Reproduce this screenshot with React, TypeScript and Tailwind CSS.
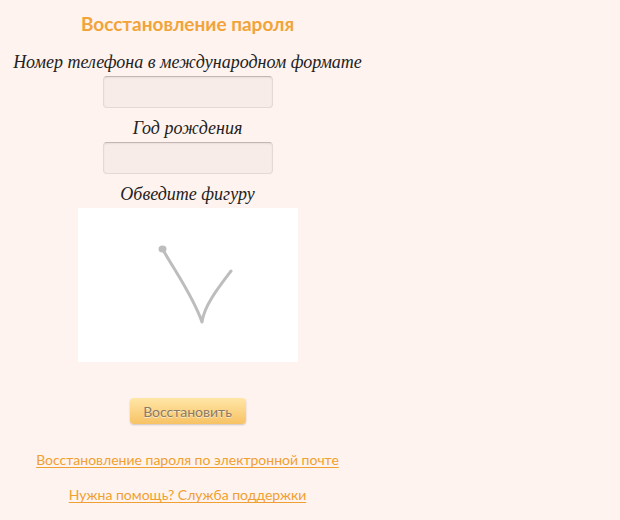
export default function App() {
  const serif = "font-['Liberation_Serif','DejaVu_Serif',serif] italic text-[18px] text-[#222]";
  const input =
    "h-[32px] w-[170px] rounded-[4px] border border-[#e6d8d4] border-t-[#c4b6b2] bg-[#f7ece8] shadow-[inset_0_1px_2px_rgba(0,0,0,0.06)]";

  return (
    <div className="min-h-[520px] w-[620px] bg-[#fff3ef] font-['Lato','Liberation_Sans',sans-serif]">
      <div className="flex w-[375px] flex-col items-center pt-[12px] text-center">
        <h1 className="text-[19px] font-bold leading-[24px] text-[#f0a43a]">Восстановление пароля</h1>

        <p className={`mt-[16px] leading-[20px] ${serif}`}>Номер телефона в международном формате</p>
        <input type="text" className={`mt-[4px] ${input}`} />

        <p className={`mt-[10px] leading-[20px] ${serif}`}>Год рождения</p>
        <input type="text" className={`mt-[4px] ${input}`} />

        <p className={`mt-[10px] leading-[20px] ${serif}`}>Обведите фигуру</p>
        <div className="mt-[4px] h-[154px] w-[220px] bg-white">
          <svg width="220" height="154" viewBox="0 0 220 154">
            <path
              d="M84 40 C 96 62, 114 86, 124 114 M124 114 C 126 98, 140 80, 153 63"
              fill="none"
              stroke="#bdbdbd"
              strokeWidth="3"
              strokeLinecap="round"
            />
            <ellipse cx="84.5" cy="41" rx="4" ry="3.5" fill="#bdbdbd" />
          </svg>
        </div>

        <button
          type="button"
          className="mt-[36px] h-[26px] w-[116px] rounded-[4px] bg-gradient-to-b from-[#ffe6a6] to-[#f7c263] text-[14px] text-[#8a7a66] shadow-[0_1px_2px_rgba(0,0,0,0.2)] [text-shadow:0_1px_0_rgba(255,255,255,0.6)]"
        >
          Восстановить
        </button>

        <a href="#" className="mt-[26px] text-[14px] leading-[20px] text-[#f0a030] underline underline-offset-2">
          Восстановление пароля по электронной почте
        </a>
        <a href="#" className="mt-[15px] text-[14px] leading-[20px] text-[#f0a030] underline underline-offset-2">
          Нужна помощь? Служба поддержки
        </a>
      </div>
    </div>
  );
}
